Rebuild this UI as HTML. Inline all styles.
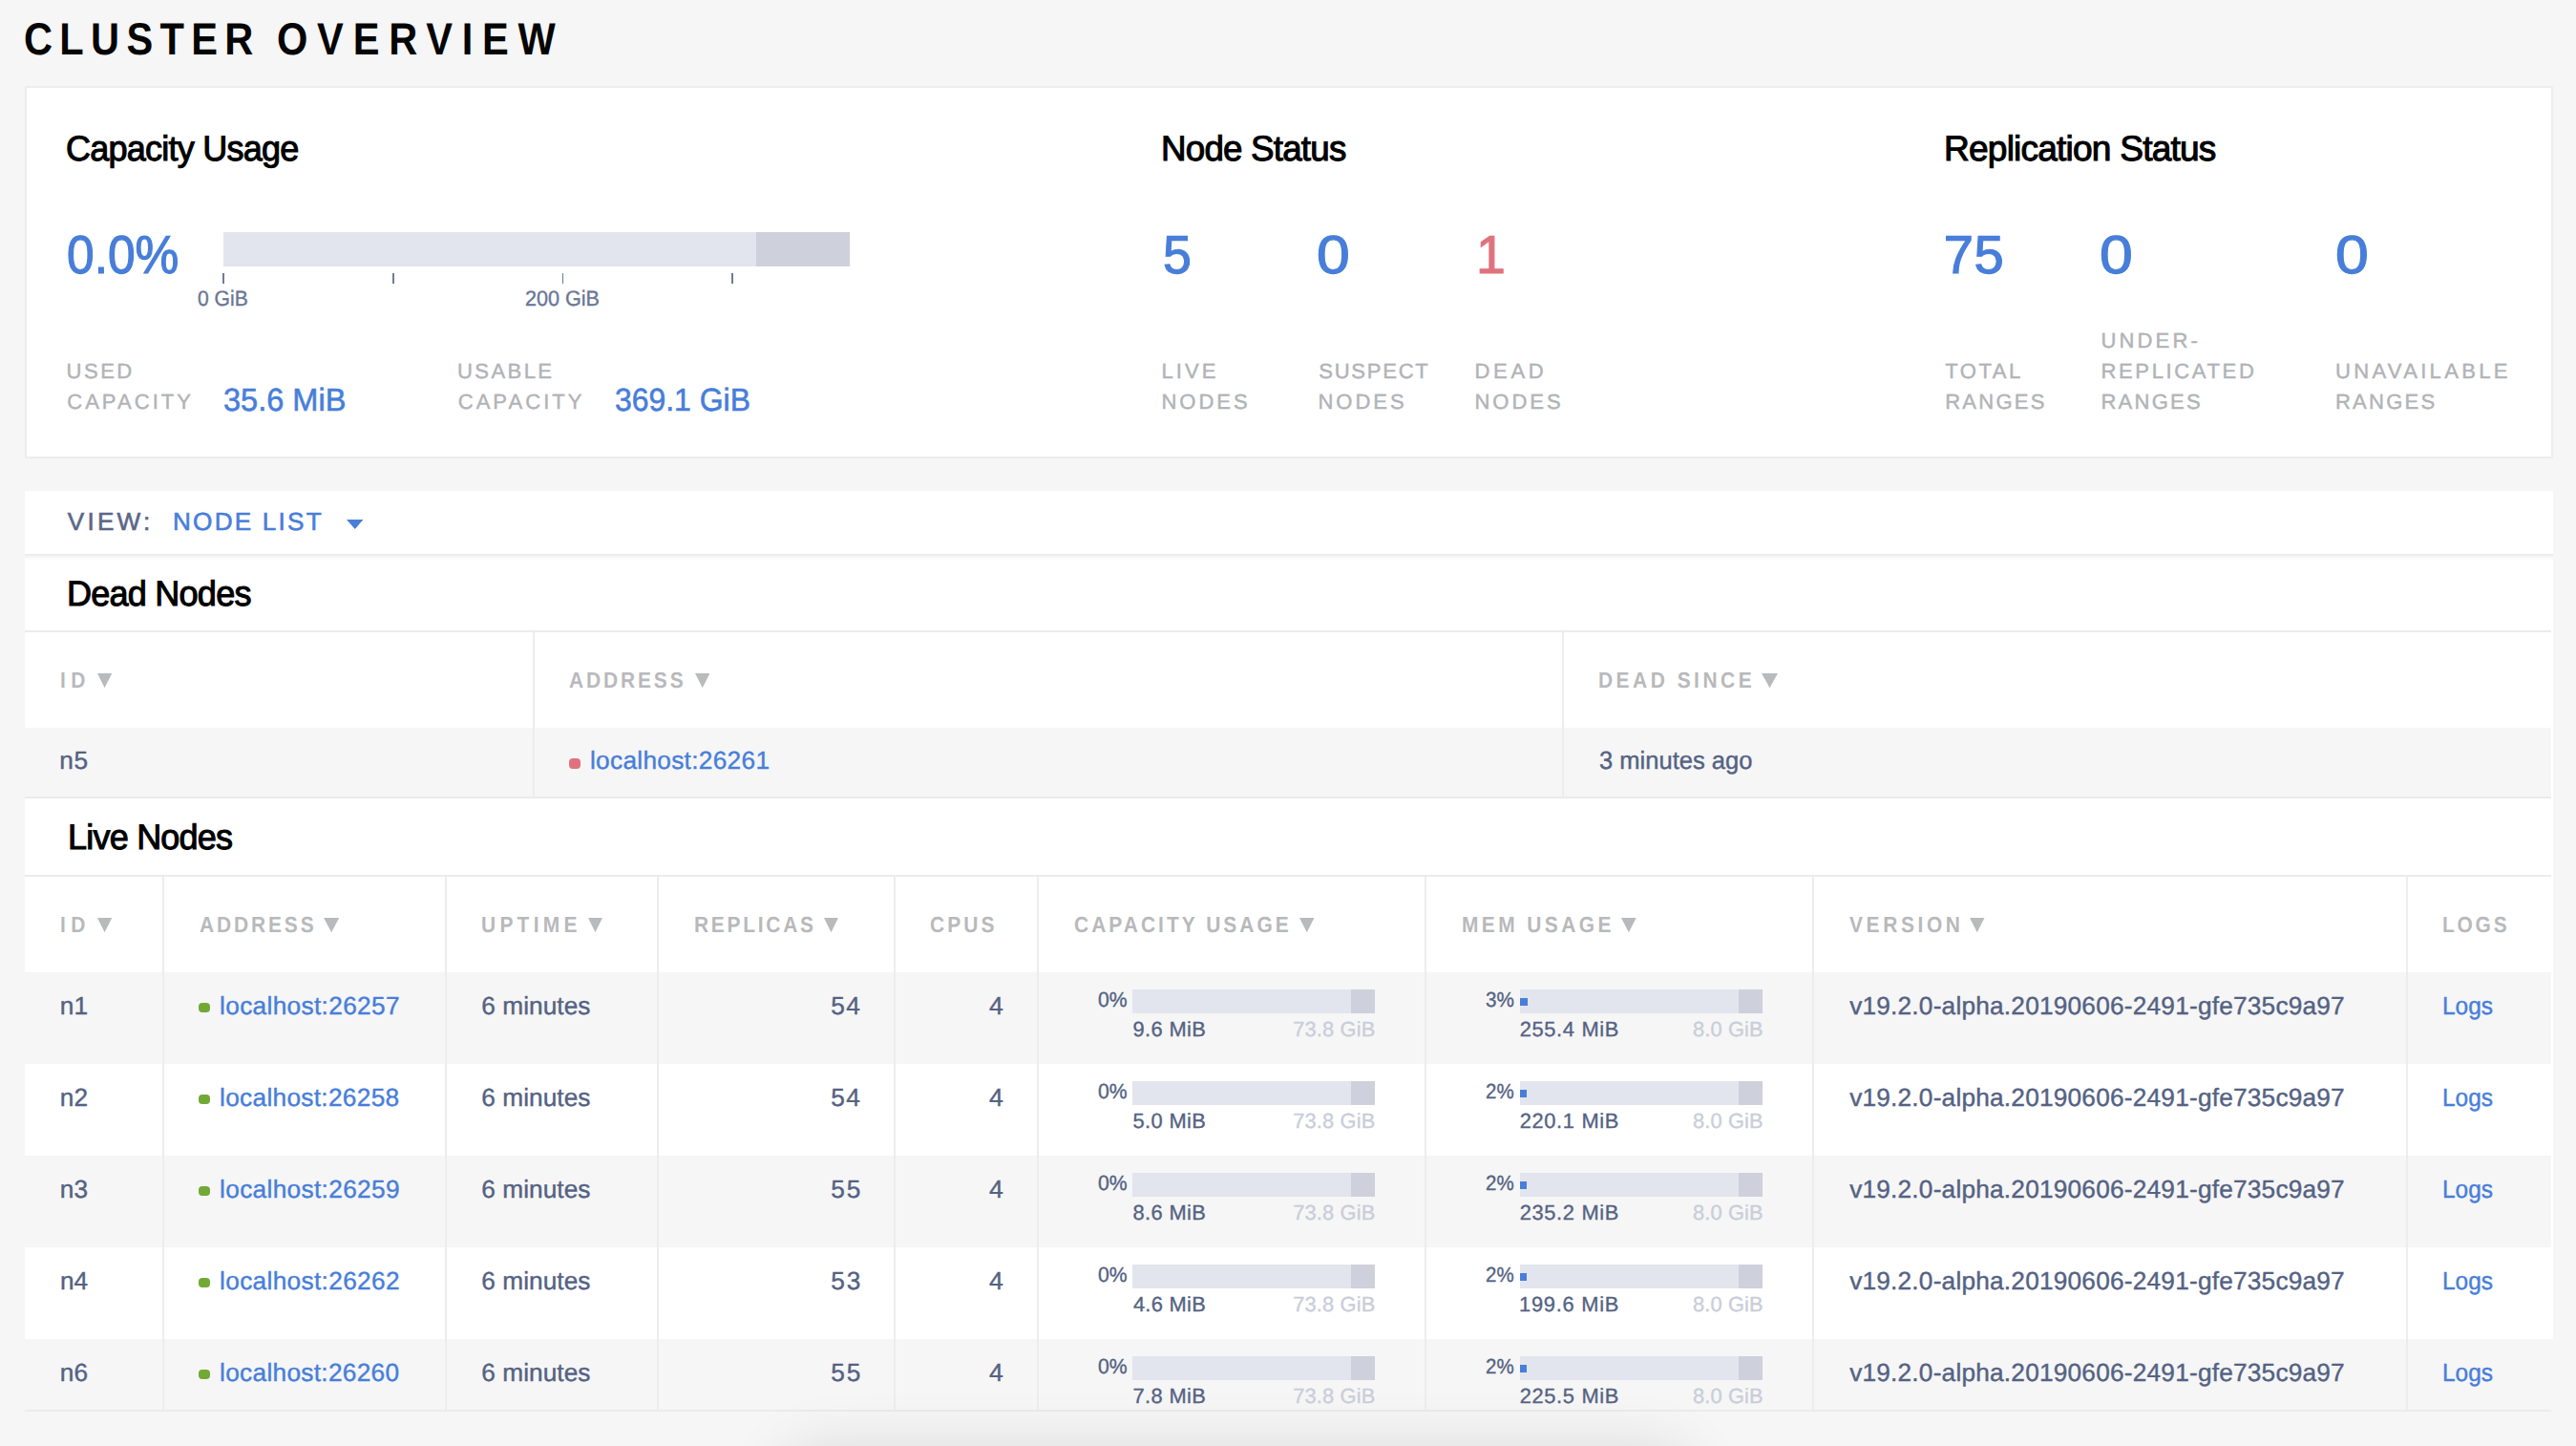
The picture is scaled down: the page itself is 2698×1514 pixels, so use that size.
<!DOCTYPE html>
<html lang="en"><head><meta charset="utf-8"><title>Cluster Overview</title>
<style>
html,body{margin:0;padding:0;}
html{width:2698px;height:1514px;overflow:hidden;}
body{width:2698px;height:1514px;overflow:hidden;background:#f6f6f6;position:relative;font-family:"Liberation Sans",sans-serif;}
.b{position:absolute;display:block;}
h1,h2{margin:0;font-size:inherit;font-weight:inherit;}
.t{position:absolute;white-space:nowrap;line-height:1;transform-origin:0 0;display:block;margin:0;font-weight:400;text-rendering:geometricPrecision;}
.title{color:#050505;font-weight:700;}
.h2{color:#000;-webkit-text-stroke-width:1.05px;}
.big{color:#487eda;-webkit-text-stroke-width:1.2px;}
.big.red{color:#e0727f;}
.axis{color:#6b7696;-webkit-text-stroke-width:0.4px;}
.lab{color:#b1b3b7;-webkit-text-stroke-width:0.45px;}
.val{color:#487eda;-webkit-text-stroke-width:0.6px;}
.view{color:#5a6787;-webkit-text-stroke-width:0.6px;}
.view.blue{color:#487eda;}
.th{color:#b8b9bb;font-weight:700;}
.td{color:#546283;-webkit-text-stroke-width:0.4px;}
.td.blue{color:#487eda;}
.sm{color:#546283;-webkit-text-stroke-width:0.35px;}
.sm.lt{color:#c9cdd9;}
</style></head>
<body>
<main>
<header><h1><span class="t title" style="left:24.54px;top:18px;font-size:47.26px;letter-spacing:8.318px;transform:scaleX(0.8800);">CLUSTER</span> <span class="t title" style="left:289.54px;top:18px;font-size:47.26px;letter-spacing:11.112px;transform:scaleX(0.8800);">OVERVIEW</span></h1></header>
<section class="summary">
<div class="b" style="left:26px;top:90px;width:2648px;height:390px;background:#fff;box-sizing:border-box;border:2px solid #ededed;"></div>
<div class="b" style="left:234px;top:243px;width:558px;height:36px;background:#e2e5ee;"></div>
<div class="b" style="left:792px;top:243px;width:98px;height:36px;background:#ced1dc;"></div>
<div class="b" style="left:232.8px;top:286px;width:2.4px;height:11px;background:#6f7a99;"></div>
<div class="b" style="left:411px;top:286px;width:2.3px;height:11px;background:#6f7a99;"></div>
<div class="b" style="left:588.8px;top:286px;width:1.6px;height:11px;background:#6f7a99;"></div>
<div class="b" style="left:766px;top:286px;width:2.3px;height:11px;background:#6f7a99;"></div>
<h2 class="t h2" style="left:69.40px;top:137px;font-size:37.03px;letter-spacing:-0.800px;transform:scaleX(0.9732);">Capacity Usage</h2>
<h2 class="t h2" style="left:1216.26px;top:137px;font-size:37.03px;letter-spacing:-0.800px;transform:scaleX(0.9927);">Node Status</h2>
<h2 class="t h2" style="left:2036.25px;top:137px;font-size:37.03px;letter-spacing:-0.800px;transform:scaleX(1.0021);">Replication Status</h2>
<span class="t big" style="left:69.52px;top:239px;font-size:56.15px;transform:scaleX(0.9169);">0.0%</span>
<span class="t big" style="left:1217.88px;top:239px;font-size:56.15px;transform:scaleX(0.9558);">5</span>
<span class="t big" style="left:1379.22px;top:239px;font-size:56.15px;transform:scaleX(1.1136);">0</span>
<span class="t big red" style="left:1546.36px;top:239px;font-size:56.15px;transform:scaleX(0.9875);">1</span>
<span class="t big" style="left:2035.75px;top:239px;font-size:56.15px;letter-spacing:0.565px;">75</span>
<span class="t big" style="left:2199.22px;top:239px;font-size:56.15px;transform:scaleX(1.1136);">0</span>
<span class="t big" style="left:2445.72px;top:239px;font-size:56.15px;transform:scaleX(1.1136);">0</span>
<span class="t axis" style="left:207.37px;top:302px;font-size:22.38px;transform:scaleX(0.9415);">0 GiB</span>
<span class="t axis" style="left:550.21px;top:302px;font-size:22.38px;transform:scaleX(0.9644);">200 GiB</span>
<span class="t lab" style="left:69.49px;top:378px;font-size:22.02px;letter-spacing:2.529px;">USED</span>
<span class="t lab" style="left:70.19px;top:410px;font-size:22.02px;letter-spacing:3.046px;">CAPACITY</span>
<span class="t lab" style="left:478.99px;top:378px;font-size:22.02px;letter-spacing:2.427px;">USABLE</span>
<span class="t lab" style="left:479.69px;top:410px;font-size:22.02px;letter-spacing:3.046px;">CAPACITY</span>
<span class="t lab" style="left:1216.45px;top:378px;font-size:22.02px;letter-spacing:3.119px;">LIVE</span>
<span class="t lab" style="left:1216.45px;top:410px;font-size:22.02px;letter-spacing:2.978px;">NODES</span>
<span class="t lab" style="left:1381.21px;top:378px;font-size:22.02px;letter-spacing:1.766px;">SUSPECT</span>
<span class="t lab" style="left:1380.45px;top:410px;font-size:22.02px;letter-spacing:2.978px;">NODES</span>
<span class="t lab" style="left:1544.45px;top:378px;font-size:22.02px;letter-spacing:3.710px;">DEAD</span>
<span class="t lab" style="left:1544.45px;top:410px;font-size:22.02px;letter-spacing:2.978px;">NODES</span>
<span class="t lab" style="left:2037.17px;top:378px;font-size:22.02px;letter-spacing:2.557px;">TOTAL</span>
<span class="t lab" style="left:2037.20px;top:410px;font-size:22.02px;letter-spacing:2.254px;">RANGES</span>
<span class="t lab" style="left:2200.49px;top:346px;font-size:22.02px;letter-spacing:3.138px;">UNDER-</span>
<span class="t lab" style="left:2200.45px;top:378px;font-size:22.02px;letter-spacing:2.642px;">REPLICATED</span>
<span class="t lab" style="left:2200.45px;top:410px;font-size:22.02px;letter-spacing:2.254px;">RANGES</span>
<span class="t lab" style="left:2445.99px;top:378px;font-size:22.02px;letter-spacing:3.318px;">UNAVAILABLE</span>
<span class="t lab" style="left:2445.95px;top:410px;font-size:22.02px;letter-spacing:2.254px;">RANGES</span>
<span class="t val" style="left:234.25px;top:403px;font-size:33.47px;transform:scaleX(0.9715);">35.6 MiB</span>
<span class="t val" style="left:643.85px;top:403px;font-size:33.47px;transform:scaleX(0.9536);">369.1 GiB</span>
</section>
<nav class="viewbar">
<div class="b" style="left:26px;top:514px;width:2648px;height:66px;background:#fff;"></div>
<svg class="b" style="left:362.5px;top:543.75px" width="17.5" height="10.0" viewBox="0 0 17.5 10.0"><polygon points="0,0 17.5,0 8.75,10.0" fill="#487eda"/></svg>
<span class="t view" style="left:70.75px;top:533px;font-size:26.14px;letter-spacing:3.248px;">VIEW:</span>
<span class="t view blue" style="left:181.04px;top:533px;font-size:26.14px;letter-spacing:2.214px;">NODE LIST</span>
</nav>
<section class="dead">
<div class="b" style="left:26px;top:580px;width:2648px;height:896px;background:#fff;"></div>
<div class="b" style="left:26px;top:580px;width:2648px;height:7px;background:transparent;background:linear-gradient(to bottom,rgba(0,0,0,0.085),rgba(0,0,0,0.03) 50%,rgba(0,0,0,0));"></div>
<div class="b" style="left:26px;top:660px;width:2646px;height:2px;background:#ebebeb;"></div>
<div class="b" style="left:26px;top:762px;width:2646px;height:72px;background:#f6f6f6;"></div>
<div class="b" style="left:26px;top:834px;width:2646px;height:2px;background:#ebebeb;"></div>
<div class="b" style="left:558px;top:662px;width:2px;height:172px;background:#ededed;"></div>
<div class="b" style="left:1636px;top:662px;width:2px;height:172px;background:#ededed;"></div>
<div class="b" style="left:596px;top:794px;width:12px;height:10.5px;background:#e0727f;border-radius:4px;"></div>
<svg class="b" style="left:101.8px;top:705px" width="15.200000000000003" height="15.200000000000045" viewBox="0 0 15.200000000000003 15.200000000000045"><polygon points="0,0 15.200000000000003,0 7.600000000000001,15.200000000000045" fill="#b9babc"/></svg>
<svg class="b" style="left:727.5px;top:705px" width="15.5" height="15.200000000000045" viewBox="0 0 15.5 15.200000000000045"><polygon points="0,0 15.5,0 7.75,15.200000000000045" fill="#b9babc"/></svg>
<svg class="b" style="left:1844.5px;top:705px" width="17.0" height="15.200000000000045" viewBox="0 0 17.0 15.200000000000045"><polygon points="0,0 17.0,0 8.5,15.200000000000045" fill="#b9babc"/></svg>
<h2 class="t h2" style="left:70.15px;top:603px;font-size:37.03px;letter-spacing:-0.800px;transform:scaleX(0.9742);">Dead Nodes</h2>
<span class="t th" style="left:63.35px;top:701px;font-size:23.25px;letter-spacing:6.093px;transform:scaleX(0.9000);">ID</span>
<span class="t th" style="left:596.31px;top:701px;font-size:23.25px;letter-spacing:3.214px;transform:scaleX(0.9000);">ADDRESS</span>
<span class="t th" style="left:1674.05px;top:701px;font-size:23.25px;letter-spacing:3.894px;transform:scaleX(0.9000);">DEAD SINCE</span>
<span class="t td" style="left:62.18px;top:783px;font-size:26.24px;letter-spacing:0.755px;">n5</span>
<span class="t td blue" style="left:617.95px;top:783px;font-size:26.24px;letter-spacing:0.304px;">localhost:26261</span>
<span class="t td" style="left:1674.69px;top:783px;font-size:26.24px;transform:scaleX(0.9734);">3 minutes ago</span>
</section>
<section class="live">
<div class="b" style="left:26px;top:916px;width:2646px;height:2px;background:#ebebeb;"></div>
<div class="b" style="left:26px;top:1018px;width:2646px;height:96px;background:#f6f6f6;"></div>
<div class="b" style="left:26px;top:1210px;width:2646px;height:96px;background:#f6f6f6;"></div>
<div class="b" style="left:26px;top:1402px;width:2648px;height:74px;background:#f6f6f6;"></div>
<div class="b" style="left:26px;top:1476px;width:2646px;height:2px;background:#ebebeb;"></div>
<div class="b" style="left:170px;top:918px;width:2px;height:558px;background:#ededed;"></div>
<div class="b" style="left:466px;top:918px;width:2px;height:558px;background:#ededed;"></div>
<div class="b" style="left:688px;top:918px;width:2px;height:558px;background:#ededed;"></div>
<div class="b" style="left:936px;top:918px;width:2px;height:558px;background:#ededed;"></div>
<div class="b" style="left:1086px;top:918px;width:2px;height:558px;background:#ededed;"></div>
<div class="b" style="left:1492px;top:918px;width:2px;height:558px;background:#ededed;"></div>
<div class="b" style="left:1898px;top:918px;width:2px;height:558px;background:#ededed;"></div>
<div class="b" style="left:2520px;top:918px;width:2px;height:558px;background:#ededed;"></div>
<div class="b" style="left:0px;top:1478px;width:2698px;height:36px;background:#f6f6f6;"></div>
<div class="b" style="left:1186px;top:1036.25px;width:229px;height:24.25px;background:#e2e5ee;"></div>
<div class="b" style="left:1415px;top:1036.25px;width:25px;height:24.25px;background:#ced1dc;"></div>
<div class="b" style="left:1592px;top:1036.25px;width:229px;height:24.25px;background:#e2e5ee;"></div>
<div class="b" style="left:1821px;top:1036.25px;width:25px;height:24.25px;background:#ced1dc;"></div>
<div class="b" style="left:1592px;top:1044.5px;width:8px;height:8px;background:#487eda;"></div>
<div class="b" style="left:208px;top:1050px;width:12px;height:10px;background:#72a936;border-radius:4px;"></div>
<div class="b" style="left:1186px;top:1132.25px;width:229px;height:24.25px;background:#e2e5ee;"></div>
<div class="b" style="left:1415px;top:1132.25px;width:25px;height:24.25px;background:#ced1dc;"></div>
<div class="b" style="left:1592px;top:1132.25px;width:229px;height:24.25px;background:#e2e5ee;"></div>
<div class="b" style="left:1821px;top:1132.25px;width:25px;height:24.25px;background:#ced1dc;"></div>
<div class="b" style="left:1592px;top:1140.5px;width:6.75px;height:8px;background:#487eda;"></div>
<div class="b" style="left:208px;top:1146px;width:12px;height:10px;background:#72a936;border-radius:4px;"></div>
<div class="b" style="left:1186px;top:1228.25px;width:229px;height:24.25px;background:#e2e5ee;"></div>
<div class="b" style="left:1415px;top:1228.25px;width:25px;height:24.25px;background:#ced1dc;"></div>
<div class="b" style="left:1592px;top:1228.25px;width:229px;height:24.25px;background:#e2e5ee;"></div>
<div class="b" style="left:1821px;top:1228.25px;width:25px;height:24.25px;background:#ced1dc;"></div>
<div class="b" style="left:1592px;top:1236.5px;width:6.75px;height:8px;background:#487eda;"></div>
<div class="b" style="left:208px;top:1242px;width:12px;height:10px;background:#72a936;border-radius:4px;"></div>
<div class="b" style="left:1186px;top:1324.25px;width:229px;height:24.25px;background:#e2e5ee;"></div>
<div class="b" style="left:1415px;top:1324.25px;width:25px;height:24.25px;background:#ced1dc;"></div>
<div class="b" style="left:1592px;top:1324.25px;width:229px;height:24.25px;background:#e2e5ee;"></div>
<div class="b" style="left:1821px;top:1324.25px;width:25px;height:24.25px;background:#ced1dc;"></div>
<div class="b" style="left:1592px;top:1332.5px;width:6.75px;height:8px;background:#487eda;"></div>
<div class="b" style="left:208px;top:1338px;width:12px;height:10px;background:#72a936;border-radius:4px;"></div>
<div class="b" style="left:1186px;top:1420.25px;width:229px;height:24.25px;background:#e2e5ee;"></div>
<div class="b" style="left:1415px;top:1420.25px;width:25px;height:24.25px;background:#ced1dc;"></div>
<div class="b" style="left:1592px;top:1420.25px;width:229px;height:24.25px;background:#e2e5ee;"></div>
<div class="b" style="left:1821px;top:1420.25px;width:25px;height:24.25px;background:#ced1dc;"></div>
<div class="b" style="left:1592px;top:1428.5px;width:6.75px;height:8px;background:#487eda;"></div>
<div class="b" style="left:208px;top:1434px;width:12px;height:10px;background:#72a936;border-radius:4px;"></div>
<div class="b" style="left:0;top:1440px;width:2698px;height:74px;overflow:hidden;"><div class="b" style="left:850px;top:112px;width:890px;height:40px;border-radius:20px;box-shadow:0 0 60px 40px rgba(0,0,0,0.10);background:rgba(0,0,0,0.10);"></div></div>
<svg class="b" style="left:101.8px;top:961px" width="15.200000000000003" height="15.200000000000045" viewBox="0 0 15.200000000000003 15.200000000000045"><polygon points="0,0 15.200000000000003,0 7.600000000000001,15.200000000000045" fill="#b9babc"/></svg>
<svg class="b" style="left:338.75px;top:961px" width="16.25" height="15.200000000000045" viewBox="0 0 16.25 15.200000000000045"><polygon points="0,0 16.25,0 8.125,15.200000000000045" fill="#b9babc"/></svg>
<svg class="b" style="left:616px;top:961px" width="15" height="15.200000000000045" viewBox="0 0 15 15.200000000000045"><polygon points="0,0 15,0 7.5,15.200000000000045" fill="#b9babc"/></svg>
<svg class="b" style="left:863px;top:961px" width="15" height="15.200000000000045" viewBox="0 0 15 15.200000000000045"><polygon points="0,0 15,0 7.5,15.200000000000045" fill="#b9babc"/></svg>
<svg class="b" style="left:1361.25px;top:961px" width="15.5" height="15.200000000000045" viewBox="0 0 15.5 15.200000000000045"><polygon points="0,0 15.5,0 7.75,15.200000000000045" fill="#b9babc"/></svg>
<svg class="b" style="left:1698px;top:961px" width="15.75" height="15.200000000000045" viewBox="0 0 15.75 15.200000000000045"><polygon points="0,0 15.75,0 7.875,15.200000000000045" fill="#b9babc"/></svg>
<svg class="b" style="left:2063.25px;top:961px" width="15.5" height="15.200000000000045" viewBox="0 0 15.5 15.200000000000045"><polygon points="0,0 15.5,0 7.75,15.200000000000045" fill="#b9babc"/></svg>
<h2 class="t h2" style="left:70.57px;top:858px;font-size:37.03px;letter-spacing:-0.800px;transform:scaleX(0.9725);">Live Nodes</h2>
<span class="t th" style="left:63.35px;top:957px;font-size:23.25px;letter-spacing:6.093px;transform:scaleX(0.9000);">ID</span>
<span class="t th" style="left:208.81px;top:957px;font-size:23.25px;letter-spacing:3.214px;transform:scaleX(0.9000);">ADDRESS</span>
<span class="t th" style="left:504.18px;top:957px;font-size:23.25px;letter-spacing:4.753px;transform:scaleX(0.9000);">UPTIME</span>
<span class="t th" style="left:726.55px;top:957px;font-size:23.25px;letter-spacing:3.049px;transform:scaleX(0.9000);">REPLICAS</span>
<span class="t th" style="left:974.17px;top:957px;font-size:23.25px;letter-spacing:3.446px;transform:scaleX(0.9000);">CPUS</span>
<span class="t th" style="left:1124.67px;top:957px;font-size:23.25px;letter-spacing:3.376px;transform:scaleX(0.9000);">CAPACITY USAGE</span>
<span class="t th" style="left:1530.55px;top:957px;font-size:23.25px;letter-spacing:3.790px;transform:scaleX(0.9000);">MEM USAGE</span>
<span class="t th" style="left:1936.64px;top:957px;font-size:23.25px;letter-spacing:4.031px;transform:scaleX(0.9000);">VERSION</span>
<span class="t th" style="left:2558.05px;top:957px;font-size:23.25px;letter-spacing:3.086px;transform:scaleX(0.9000);">LOGS</span>
<span class="t td" style="left:62.63px;top:1040px;font-size:26.24px;letter-spacing:0.373px;">n1</span>
<span class="t td blue" style="left:230.05px;top:1040px;font-size:26.24px;letter-spacing:0.334px;">localhost:26257</span>
<span class="t td" style="left:504.24px;top:1040px;font-size:26.24px;letter-spacing:0.058px;">6 minutes</span>
<span class="t td" style="left:870.15px;top:1040px;font-size:26.24px;letter-spacing:1.616px;">54</span>
<span class="t td" style="left:1035.59px;top:1040px;font-size:26.24px;transform:scaleX(1.0128);">4</span>
<span class="t sm" style="left:1149.95px;top:1036px;font-size:21.85px;transform:scaleX(0.9684);">0%</span>
<span class="t sm" style="left:1186.51px;top:1067px;font-size:21.85px;letter-spacing:0.375px;">9.6 MiB</span>
<span class="t sm lt" style="left:1354.17px;top:1067px;font-size:21.85px;letter-spacing:0.156px;">73.8 GiB</span>
<span class="t sm" style="left:1556.34px;top:1036px;font-size:21.85px;transform:scaleX(0.9461);">3%</span>
<span class="t sm" style="left:1591.67px;top:1067px;font-size:21.85px;letter-spacing:0.674px;">255.4 MiB</span>
<span class="t sm lt" style="left:1773.00px;top:1067px;font-size:21.85px;letter-spacing:0.118px;">8.0 GiB</span>
<span class="t td" style="left:1937.15px;top:1040px;font-size:26.24px;letter-spacing:0.211px;">v19.2.0-alpha.20190606-2491-gfe735c9a97</span>
<span class="t td blue" style="left:2558.24px;top:1040px;font-size:26.24px;transform:scaleX(0.9326);">Logs</span>
<span class="t td" style="left:62.63px;top:1136px;font-size:26.24px;letter-spacing:0.388px;">n2</span>
<span class="t td blue" style="left:230.05px;top:1136px;font-size:26.24px;letter-spacing:0.309px;">localhost:26258</span>
<span class="t td" style="left:504.24px;top:1136px;font-size:26.24px;letter-spacing:0.058px;">6 minutes</span>
<span class="t td" style="left:870.15px;top:1136px;font-size:26.24px;letter-spacing:1.616px;">54</span>
<span class="t td" style="left:1035.59px;top:1136px;font-size:26.24px;transform:scaleX(1.0128);">4</span>
<span class="t sm" style="left:1149.95px;top:1132px;font-size:21.85px;transform:scaleX(0.9684);">0%</span>
<span class="t sm" style="left:1186.47px;top:1163px;font-size:21.85px;letter-spacing:0.382px;">5.0 MiB</span>
<span class="t sm lt" style="left:1354.17px;top:1163px;font-size:21.85px;letter-spacing:0.156px;">73.8 GiB</span>
<span class="t sm" style="left:1556.21px;top:1132px;font-size:21.85px;transform:scaleX(0.9371);">2%</span>
<span class="t sm" style="left:1591.67px;top:1163px;font-size:21.85px;letter-spacing:0.674px;">220.1 MiB</span>
<span class="t sm lt" style="left:1773.00px;top:1163px;font-size:21.85px;letter-spacing:0.118px;">8.0 GiB</span>
<span class="t td" style="left:1937.15px;top:1136px;font-size:26.24px;letter-spacing:0.211px;">v19.2.0-alpha.20190606-2491-gfe735c9a97</span>
<span class="t td blue" style="left:2558.24px;top:1136px;font-size:26.24px;transform:scaleX(0.9326);">Logs</span>
<span class="t td" style="left:62.63px;top:1232px;font-size:26.24px;letter-spacing:0.325px;">n3</span>
<span class="t td blue" style="left:230.05px;top:1232px;font-size:26.24px;letter-spacing:0.335px;">localhost:26259</span>
<span class="t td" style="left:504.24px;top:1232px;font-size:26.24px;letter-spacing:0.058px;">6 minutes</span>
<span class="t td" style="left:870.15px;top:1232px;font-size:26.24px;letter-spacing:1.929px;">55</span>
<span class="t td" style="left:1035.59px;top:1232px;font-size:26.24px;transform:scaleX(1.0128);">4</span>
<span class="t sm" style="left:1149.95px;top:1228px;font-size:21.85px;transform:scaleX(0.9684);">0%</span>
<span class="t sm" style="left:1186.55px;top:1259px;font-size:21.85px;letter-spacing:0.368px;">8.6 MiB</span>
<span class="t sm lt" style="left:1354.17px;top:1259px;font-size:21.85px;letter-spacing:0.156px;">73.8 GiB</span>
<span class="t sm" style="left:1556.21px;top:1228px;font-size:21.85px;transform:scaleX(0.9371);">2%</span>
<span class="t sm" style="left:1591.67px;top:1259px;font-size:21.85px;letter-spacing:0.674px;">235.2 MiB</span>
<span class="t sm lt" style="left:1773.00px;top:1259px;font-size:21.85px;letter-spacing:0.118px;">8.0 GiB</span>
<span class="t td" style="left:1937.15px;top:1232px;font-size:26.24px;letter-spacing:0.211px;">v19.2.0-alpha.20190606-2491-gfe735c9a97</span>
<span class="t td blue" style="left:2558.24px;top:1232px;font-size:26.24px;transform:scaleX(0.9326);">Logs</span>
<span class="t td" style="left:62.63px;top:1328px;font-size:26.24px;transform:scaleX(0.9978);">n4</span>
<span class="t td blue" style="left:230.05px;top:1328px;font-size:26.24px;letter-spacing:0.334px;">localhost:26262</span>
<span class="t td" style="left:504.24px;top:1328px;font-size:26.24px;letter-spacing:0.058px;">6 minutes</span>
<span class="t td" style="left:870.15px;top:1328px;font-size:26.24px;letter-spacing:2.000px;">53</span>
<span class="t td" style="left:1035.59px;top:1328px;font-size:26.24px;transform:scaleX(1.0128);">4</span>
<span class="t sm" style="left:1149.95px;top:1324px;font-size:21.85px;transform:scaleX(0.9684);">0%</span>
<span class="t sm" style="left:1186.92px;top:1355px;font-size:21.85px;letter-spacing:0.306px;">4.6 MiB</span>
<span class="t sm lt" style="left:1354.17px;top:1355px;font-size:21.85px;letter-spacing:0.156px;">73.8 GiB</span>
<span class="t sm" style="left:1556.21px;top:1324px;font-size:21.85px;transform:scaleX(0.9371);">2%</span>
<span class="t sm" style="left:1591.03px;top:1355px;font-size:21.85px;letter-spacing:0.754px;">199.6 MiB</span>
<span class="t sm lt" style="left:1773.00px;top:1355px;font-size:21.85px;letter-spacing:0.118px;">8.0 GiB</span>
<span class="t td" style="left:1937.15px;top:1328px;font-size:26.24px;letter-spacing:0.211px;">v19.2.0-alpha.20190606-2491-gfe735c9a97</span>
<span class="t td blue" style="left:2558.24px;top:1328px;font-size:26.24px;transform:scaleX(0.9326);">Logs</span>
<span class="t td" style="left:62.63px;top:1424px;font-size:26.24px;letter-spacing:0.298px;">n6</span>
<span class="t td blue" style="left:230.05px;top:1424px;font-size:26.24px;letter-spacing:0.304px;">localhost:26260</span>
<span class="t td" style="left:504.24px;top:1424px;font-size:26.24px;letter-spacing:0.058px;">6 minutes</span>
<span class="t td" style="left:870.15px;top:1424px;font-size:26.24px;letter-spacing:1.929px;">55</span>
<span class="t td" style="left:1035.59px;top:1424px;font-size:26.24px;transform:scaleX(1.0128);">4</span>
<span class="t sm" style="left:1149.95px;top:1420px;font-size:21.85px;transform:scaleX(0.9684);">0%</span>
<span class="t sm" style="left:1186.47px;top:1451px;font-size:21.85px;letter-spacing:0.382px;">7.8 MiB</span>
<span class="t sm lt" style="left:1354.17px;top:1451px;font-size:21.85px;letter-spacing:0.156px;">73.8 GiB</span>
<span class="t sm" style="left:1556.21px;top:1420px;font-size:21.85px;transform:scaleX(0.9371);">2%</span>
<span class="t sm" style="left:1591.67px;top:1451px;font-size:21.85px;letter-spacing:0.674px;">225.5 MiB</span>
<span class="t sm lt" style="left:1773.00px;top:1451px;font-size:21.85px;letter-spacing:0.118px;">8.0 GiB</span>
<span class="t td" style="left:1937.15px;top:1424px;font-size:26.24px;letter-spacing:0.211px;">v19.2.0-alpha.20190606-2491-gfe735c9a97</span>
<span class="t td blue" style="left:2558.24px;top:1424px;font-size:26.24px;transform:scaleX(0.9326);">Logs</span>
</section>
<div class="chrome">
</div>
</main>
</body></html>
